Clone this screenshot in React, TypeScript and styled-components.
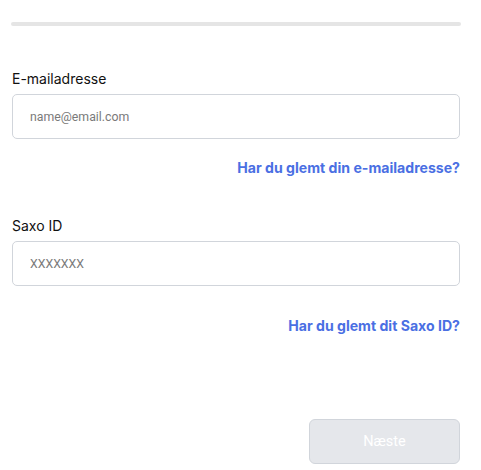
import styled, { createGlobalStyle } from "styled-components";

const GlobalStyle = createGlobalStyle`
  body {
    margin: 0;
    background: #ffffff;
    font-family: Inter, "Noto Sans", sans-serif;
  }
`;

export default function App() {
  return (
    <>
      <GlobalStyle />
      <SPage>
        <SProgress />
        <SLabel $top={43}>E-mailadresse</SLabel>
        <SInput placeholder="name@email.com" />
        <SLink href="#" $top={19}>
          Har du glemt din e-mailadresse?
        </SLink>
        <SLabel $top={38}>Saxo ID</SLabel>
        <SInput placeholder="XXXXXXX" />
        <SLink href="#" $top={30}>
          Har du glemt dit Saxo ID?
        </SLink>
        <SFooter>
          <SButton disabled>Næste</SButton>
        </SFooter>
      </SPage>
    </>
  );
}

const SPage = styled.div`
  display: flex;
  flex-direction: column;
  width: 450px;
  padding: 22px 0 0 11px;
`;

const SProgress = styled.div`
  height: 4px;
  border-radius: 2px;
  background-color: #e5e5e5;
`;

const SLabel = styled.label<{ $top: number }>`
  margin: ${(p) => p.$top}px 0 5px 1px;
  font-size: 14px;
  line-height: 20px;
  color: #111111;
`;

const SInput = styled.input`
  box-sizing: border-box;
  width: 448px;
  height: 45px;
  margin-left: 1px;
  padding: 0 17px;
  border: 1px solid #d1d5db;
  border-radius: 5px;
  font-family: Roboto, Arial, sans-serif;
  font-size: 12.3px;
  color: #111111;
  outline: none;

  &::placeholder {
    color: #7a7a7a;
  }
`;

const SLink = styled.a<{ $top: number }>`
  align-self: flex-end;
  margin: ${(p) => p.$top}px 1px 0 0;
  font-size: 14.1px;
  line-height: 20px;
  font-weight: 700;
  color: #4a6fe3;
  text-decoration: none;
`;

const SFooter = styled.div`
  display: flex;
  justify-content: flex-end;
  margin-top: 83px;
  padding-right: 1px;
`;

const SButton = styled.button`
  width: 151px;
  height: 45px;
  border: 1px solid #d1d5db;
  border-radius: 6px;
  background-color: #e5e7eb;
  font-family: Roboto, Arial, sans-serif;
  font-size: 14.5px;
  color: #ffffff;
`;
